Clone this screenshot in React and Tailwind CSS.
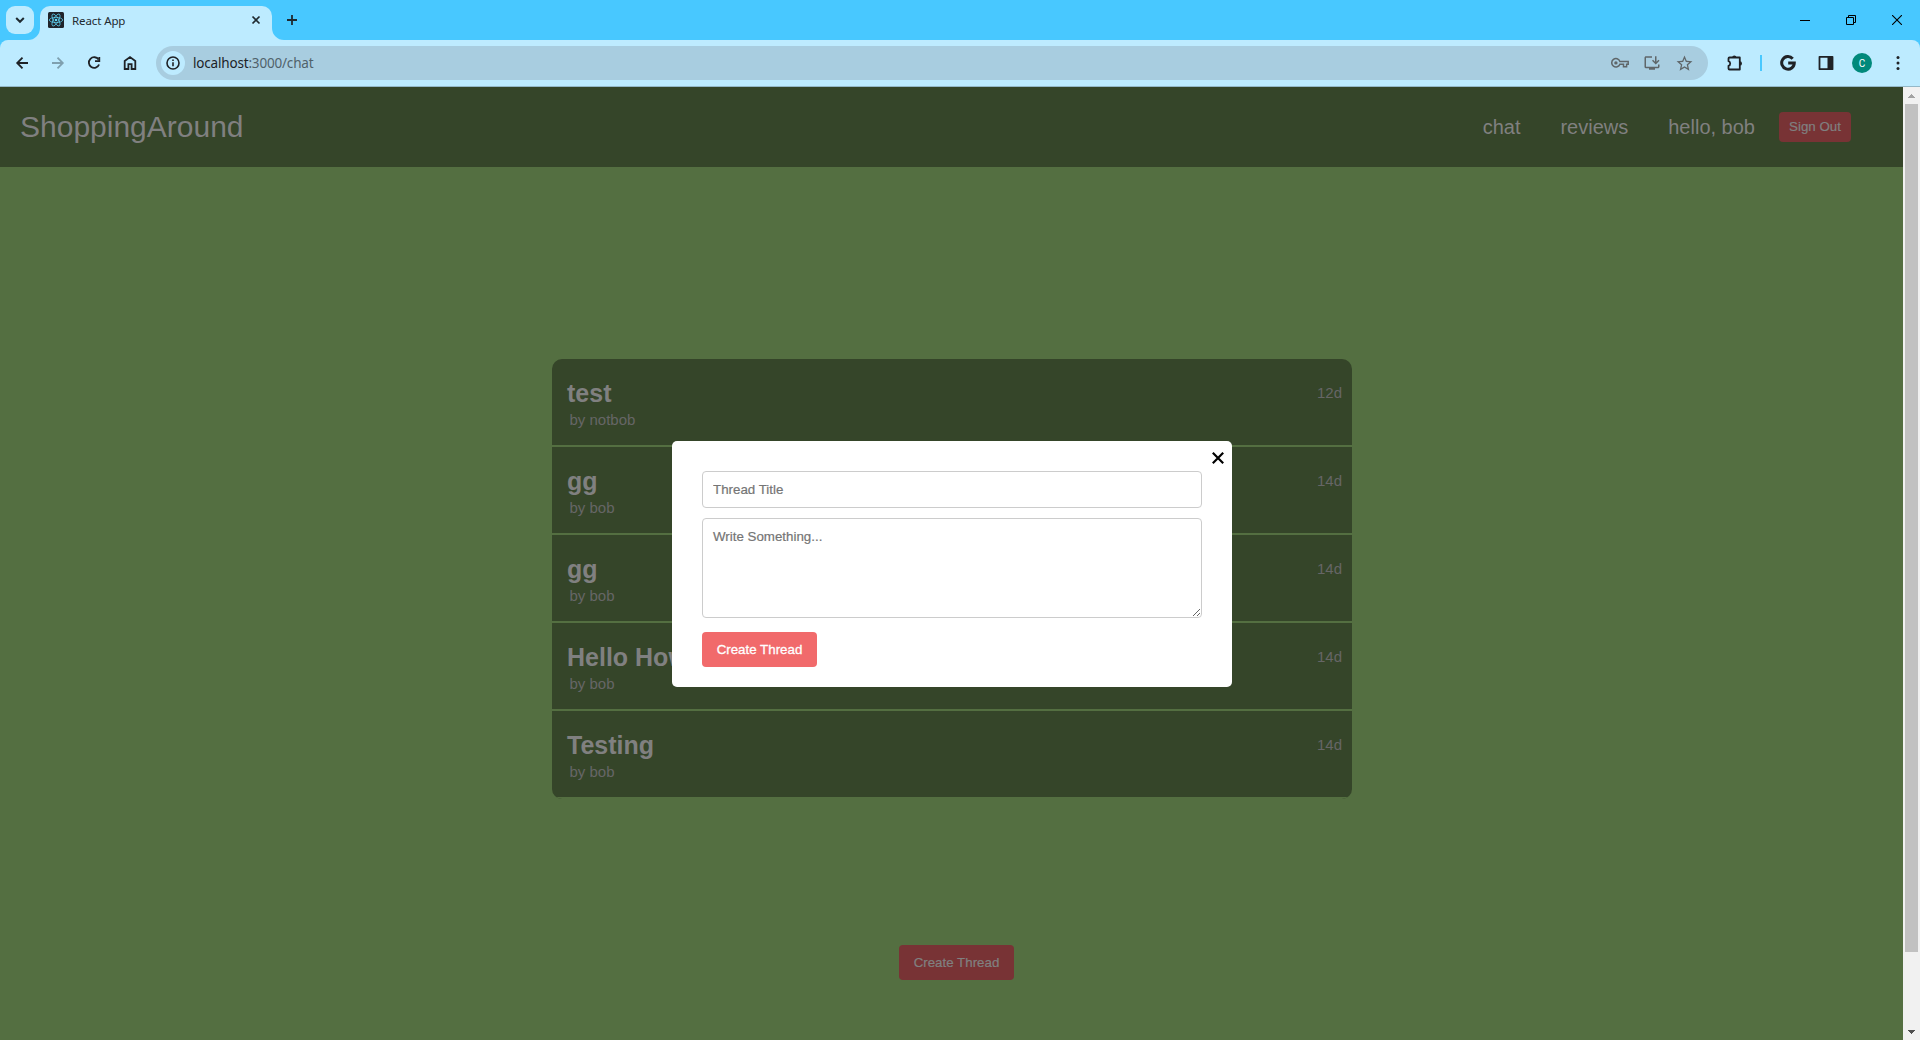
import React from 'react';
import { MdOutlineInstallDesktop, MdStarBorder } from 'react-icons/md';

const threads = [
  { title: 'test', author: 'notbob', age: '12d' },
  { title: 'gg', author: 'bob', age: '14d' },
  { title: 'gg', author: 'bob', age: '14d' },
  { title: 'Hello How', author: 'bob', age: '14d' },
  { title: 'Testing', author: 'bob', age: '14d' },
];

function Slot({ children, className = 'w-9' }) {
  return <div className={`flex h-full shrink-0 items-center justify-center ${className}`}>{children}</div>;
}

function Glyph({ size = 16, width = 1.8, children }) {
  return (
    <svg width={size} height={size} viewBox={`0 0 ${size} ${size}`} fill="none" stroke="currentColor" strokeWidth={width}>
      {children}
    </svg>
  );
}

function ReactMark() {
  return (
    <svg width="16" height="16" viewBox="0 0 16 16" fill="none" stroke="#61dafb" strokeWidth="0.7">
      <rect width="16" height="16" rx="1.5" fill="#20232a" stroke="none" />
      <circle cx="8" cy="8" r="1.3" fill="#61dafb" stroke="none" />
      <ellipse cx="8" cy="8" rx="6.7" ry="2.6" />
      <ellipse cx="8" cy="8" rx="6.7" ry="2.6" transform="rotate(60 8 8)" />
      <ellipse cx="8" cy="8" rx="6.7" ry="2.6" transform="rotate(120 8 8)" />
    </svg>
  );
}

function TabStrip() {
  return (
    <div className="flex h-10 bg-[#48c8ff] text-[#1f2a30]">
      <div className="mt-1.5 ml-1.5 flex size-7 items-center justify-center rounded-[9px] bg-[#bdebff]">
        <Glyph size={10} width={2}>
          <path d="M1.2 3 5 6.8 8.8 3" />
        </Glyph>
      </div>
      <svg className="-ml-1.5 self-end" width="12" height="12" viewBox="0 0 12 12">
        <path d="M12 0v12H0A12 12 0 0 0 12 0Z" fill="#bdebff" />
      </svg>
      <div className="mt-1.5 flex w-58 rounded-t-[10px] bg-[#bdebff] pb-1.5 pl-2">
        <div className="flex w-full items-center">
          <ReactMark />
          <span className="ml-2 w-[175px] pt-px font-['Noto_Sans'] text-[11.5px] tracking-[-0.1px]">React App</span>
          <Glyph size={18} width={1.7}>
            <path d="m5.5 5.5 7 7m0-7-7 7" />
          </Glyph>
        </div>
      </div>
      <svg className="self-end" width="12" height="12" viewBox="0 0 12 12">
        <path d="M0 0v12h12A12 12 0 0 1 0 0Z" fill="#bdebff" />
      </svg>
      <div className="flex w-4 items-center justify-center">
        <Glyph size={10}>
          <path d="M5 0v10M0 5h10" />
        </Glyph>
      </div>
      <div className="ml-auto flex text-black">
        <Slot className="w-[46px]">
          <Glyph size={10} width={1}>
            <path d="M0 5.5h10" />
          </Glyph>
        </Slot>
        <Slot className="w-[46px]">
          <Glyph size={10} width={1}>
            <path d="M.5 2.5h7v7h-7zM2.5 2.5v-2h7v7h-2" />
          </Glyph>
        </Slot>
        <Slot className="w-[46px]">
          <Glyph size={10} width={1.1}>
            <path d="m0 0 10 10M10 0 0 10" />
          </Glyph>
        </Slot>
      </div>
    </div>
  );
}

function Toolbar() {
  return (
    <div className="bg-[#48c8ff]">
      <div className="flex h-[47px] items-center rounded-t-lg border-b border-[#94b8c8] bg-[#bdebff] pl-1 text-[#1f2226]">
        <Slot>
          <Glyph>
            <path d="M14 8H3.500M8.500 2.600 3.200 8l5.300 5.400" />
          </Glyph>
        </Slot>
        <Slot className="w-9 text-[#7fa0af]">
          <Glyph>
            <path d="M2 8h10.500M7.500 2.600 12.800 8l-5.300 5.400" />
          </Glyph>
        </Slot>
        <Slot>
          <Glyph>
            <path d="M12.600 4.600A5.300 5.300 0 1 0 13.100 9.500" />
            <path d="M13.300 2v4.200H9" />
          </Glyph>
        </Slot>
        <Slot>
          <Glyph>
            <path d="M2.700 14V6L8 2.100 13.300 6v8H9.600V9.200H6.400V14z" />
          </Glyph>
        </Slot>
        <div className="ml-2 flex h-[34px] w-[1552px] items-center rounded-full bg-[#a8cde0] pl-[5px]">
          <div className="flex size-6 items-center justify-center rounded-full bg-[#bdebff]">
            <Glyph width={1.6}>
              <circle cx="8" cy="8" r="6" />
              <path d="M8 7.200v4M8 4.600v1.500" />
            </Glyph>
          </div>
          <span className="ml-2 font-['Noto_Sans'] text-[13.5px] tracking-[-0.18px] text-[#50626b]">
            <span className="text-[#1c2327]">localhost</span>:3000/chat
          </span>
          <div className="mr-2 ml-auto flex items-center text-[#5f6669]">
            <Slot className="w-8">
              <svg width="18" height="18" viewBox="0 -4 18 18" fill="none" stroke="currentColor" strokeWidth="1.500">
                <path d="M8.900 3.400H17.200v2.800h-1.600v2.600h-3.100V6.200H8.900A4.200 4.200 0 1 1 8.900 3.400z" />
                <circle cx="4.900" cy="4.900" r="1.700" fill="currentColor" stroke="none" />
              </svg>
            </Slot>
            <Slot className="w-8"><MdOutlineInstallDesktop size={18} /></Slot>
            <Slot className="w-8"><MdStarBorder size={19} /></Slot>
          </div>
        </div>
        <Slot className="ml-[9px] w-9">
          <Glyph size={18}>
            <path d="M3.500 3.500h10.300v12H3.500q-1 0-1-1v-2.700a2.400 2.400 0 0 0 0-4.600V4.500q0-1 1-1z" strokeLinejoin="round" />
            <path d="M6.200 3.500a2.100 2.100 0 0 1 4.200 0zM13.800 7.200a2.200 2.200 0 0 1 0 4.400z" fill="currentColor" stroke="none" />
          </Glyph>
        </Slot>
        <div className="ml-[7px] h-4 w-0.5 bg-[#48c8ff]" />
        <Slot className="ml-2 w-9">
          <Glyph size={16} width={3}>
            <path d="M12.700 3.700A6.300 6.300 0 1 0 14.300 8H8.200" />
          </Glyph>
        </Slot>
        <Slot className="ml-0.5 w-9">
          <Glyph>
            <path d="M1.500 1.800h13v12.400h-13z" strokeLinejoin="round" />
            <path d="M9.500 2h5v12h-5z" fill="currentColor" stroke="none" />
          </Glyph>
        </Slot>
        <Slot>
          <div className="flex size-5 items-center justify-center rounded-full bg-[#00897b] font-['Roboto'] text-[10px] text-white">C</div>
        </Slot>
        <Slot>
          <svg width="4" height="16" viewBox="0 0 4 16" fill="currentColor">
            <circle cx="2" cy="2.500" r="1.500" />
            <circle cx="2" cy="8" r="1.500" />
            <circle cx="2" cy="13.500" r="1.500" />
          </svg>
        </Slot>
      </div>
    </div>
  );
}

function SiteHeader() {
  return (
    <header className="flex h-20 items-center bg-[#354529] pr-[52px] pl-5 text-[#808080]">
      <h1 className="pb-0.5 text-[30px]">ShoppingAround</h1>
      <nav className="ml-auto flex gap-10 text-[20px]">
        <span>chat</span>
        <span>reviews</span>
        <span>hello, bob</span>
      </nav>
      <button className="ml-6 h-[30px] w-[72px] rounded bg-[#783335] text-[13.333px] [-webkit-text-stroke:0.2px]">Sign Out</button>
    </header>
  );
}

function ThreadList() {
  return (
    <ul className="mt-48 ml-[552px] w-[800px] overflow-hidden rounded-[10px]">
      {threads.map((thread, i) => (
        <li key={i} className="flex h-[88px] justify-between border-b-2 border-[#546f41] bg-[#354529] pt-5 pr-2.5 pl-[15px]">
          <div>
            <h2 className="text-[25px] leading-[28px] font-bold text-[#808080]">{thread.title}</h2>
            <p className="ml-[2.5px] text-[15px] leading-[25px] text-[#666]">by {thread.author}</p>
          </div>
          <span className="text-[15px] leading-[28px] text-[#666]">{thread.age}</span>
        </li>
      ))}
    </ul>
  );
}

function ThreadModal() {
  return (
    <div className="absolute top-[354px] left-[672px] flex h-[246px] w-[560px] flex-col items-start rounded-[5px] bg-white px-[30px] pt-[30px]">
      <svg className="absolute top-[11px] right-2" width="12" height="12" viewBox="0 0 12 12" stroke="#000" strokeWidth="2.200">
        <path d="m.8.8 10.400 10.400M11.200.8.8 11.200" />
      </svg>
      <input
        placeholder="Thread Title"
        className="h-[37px] w-full rounded border border-[#ccc] px-2.5 text-[13.333px] [-webkit-text-stroke:0.2px] placeholder:text-[#757575]"
      />
      <textarea
        placeholder="Write Something..."
        className="mt-2.5 h-[100px] w-full shrink-0 resize rounded border border-[#ccc] p-2.5 text-[13.333px] leading-[15px] [-webkit-text-stroke:0.2px] placeholder:text-[#757575]"
      />
      <button className="mt-3.5 h-[35px] w-[115px] rounded bg-[#f16a6b] text-[13.333px] text-white [-webkit-text-stroke:0.3px]">
        Create Thread
      </button>
    </div>
  );
}

function Scrollbar() {
  return (
    <div className="flex w-[17px] flex-col items-center bg-[#f1f1f1]">
      <div className="flex h-[17px] items-center">
        <svg width="7" height="4" viewBox="0 0 7 4" fill="#a3a3a3" shapeRendering="crispEdges">
          <path d="M3.500 0 7 4H0z" />
        </svg>
      </div>
      <div className="h-[848px] w-[13px] bg-[#c1c1c1]" />
      <div className="mt-auto flex h-[17px] items-center">
        <svg width="7" height="4" viewBox="0 0 7 4" fill="#505050" shapeRendering="crispEdges">
          <path d="M0 0h7L3.500 4z" />
        </svg>
      </div>
    </div>
  );
}

export default function App() {
  return (
    <div className="flex h-[1040px] w-[1920px] flex-col overflow-hidden font-['Liberation_Sans',Arial,sans-serif]">
      <TabStrip />
      <Toolbar />
      <div className="flex flex-1">
        <main className="relative w-[1903px] bg-[#546f41]">
          <SiteHeader />
          <ThreadList />
          <button className="mt-[146px] ml-[899px] block h-[35px] w-[115px] rounded bg-[#783335] text-[13.333px] text-[#808080] [-webkit-text-stroke:0.2px]">
            Create Thread
          </button>
          <ThreadModal />
        </main>
        <Scrollbar />
      </div>
    </div>
  );
}
